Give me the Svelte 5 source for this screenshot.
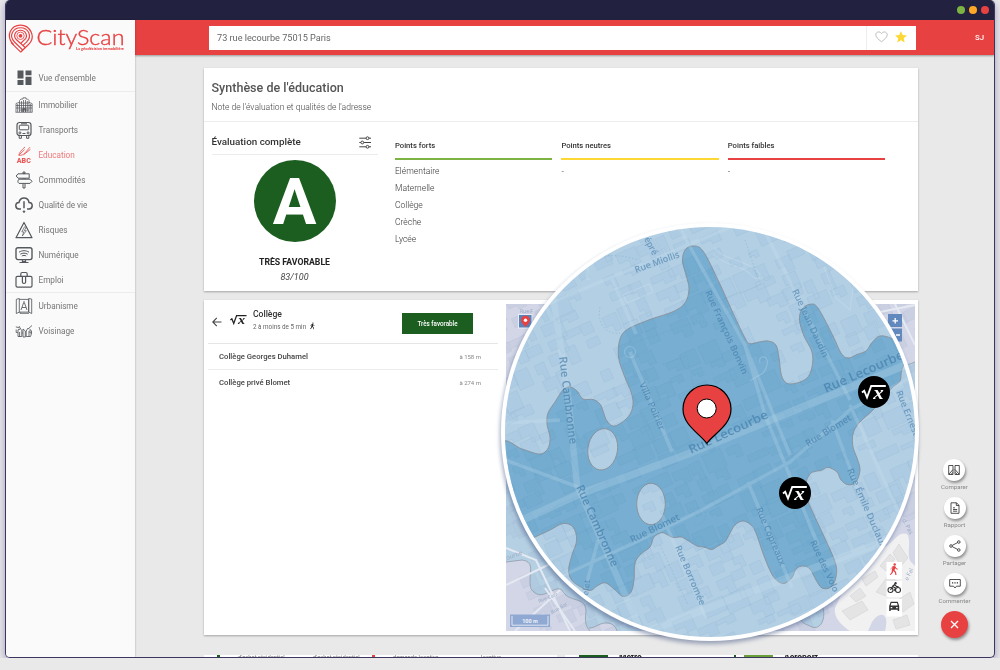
<script>
  const nav = [
    { label: "Vue d'ensemble", icon: 'grid', first: true },
    { label: 'Immobilier', icon: 'building' },
    { label: 'Transports', icon: 'bus' },
    { label: 'Education', icon: 'abc', active: true },
    { label: 'Commodités', icon: 'sign' },
    { label: 'Qualité de vie', icon: 'cloud' },
    { label: 'Risques', icon: 'risk' },
    { label: 'Numérique', icon: 'screen' },
    { label: 'Emploi', icon: 'case', last: true },
    { label: 'Urbanisme', icon: 'plan' },
    { label: 'Voisinage', icon: 'people' }
  ];
  const points = [
    { title: 'Points forts', color: '#7cb342', items: ['Elémentaire', 'Maternelle', 'Collège', 'Crèche', 'Lycée'] },
    { title: 'Points neutres', color: '#fdd835', items: ['-'] },
    { title: 'Points faibles', color: '#e84142', items: ['-'] }
  ];
  const schools = [
    { name: 'Collège Georges Duhamel', dist: 'à 158 m' },
    { name: 'Collège privé Blomet', dist: 'à 274 m' }
  ];
  const actions = [
    { label: 'Comparer', icon: 'compare' },
    { label: 'Rapport', icon: 'doc' },
    { label: 'Partager', icon: 'share' },
    { label: 'Commenter', icon: 'comment' }
  ];

  // Walking zone outline, smoothed with a Catmull-Rom spline.
  const zone = [
    [693,246],[685,250],[682.5,261],[686,275],[689,289],[685,303],[673,311.7],[650,319.5],[628,329],[620,339],[618.5,357],[624,375],[631,392],[633,405],[628,417],[615,426],[607,421],[603,411],[600,404],[593,399.5],[583,399],[577,391],[570,387],[563,390],[555,402],[548,413],[547,424],[550,437],[549,446],[545,452],[538,454],[522,449],[500,442],[480,480],[510,548],[535,537],[550,530],[563,523.5],[573,527],[576.7,540],[572,555],[568.7,569],[571,579],[579,586],[590,590.5],[597,586],[605,582.7],[613,588],[623,596.5],[631,592],[634,580],[635,563],[641,554],[650,547],[654,537],[661.7,532.7],[667,534.5],[673,537.5],[681,537],[687,540],[697,546],[704,547],[711.7,549.5],[718,546],[725,541.7],[729,535],[735,525],[743,521],[751,525],[756,533],[764,556],[773,576],[782.7,583.5],[791.7,578],[796,569],[802.7,566],[810,569],[816,580],[822,588],[831,587],[836,577],[835,561.7],[821,530],[806.7,498],[806,483],[810,474],[815,471.5],[822,470],[828,467.3],[837,472],[841,480],[848,484.7],[856,482],[860,470],[857,458],[853,447],[853,434],[859,423],[875,408],[892,388],[900,381],[902,369],[910,350],[893,339],[880,336],[871.7,343],[866,351],[857,354.5],[848,358],[841,353],[833,336],[818,308],[810,304.3],[802,309],[799.5,320],[804,336],[812,352],[812,367],[806,379],[790,384],[782,377],[779,358],[776,345],[768,341],[759,342],[750,343.7],[745,338],[733,313],[718,280],[703,251]
  ];
  function smooth(p) {
    const n = p.length;
    let d = `M${p[0]}`;
    for (let i = 0; i < n; i++) {
      const a = p[(i - 1 + n) % n], b = p[i], c = p[(i + 1) % n], e = p[(i + 2) % n];
      const k = 6;
      d += `C${(b[0] + (c[0] - a[0]) / k).toFixed(1)} ${(b[1] + (c[1] - a[1]) / k).toFixed(1)} ${(c[0] - (e[0] - b[0]) / k).toFixed(1)} ${(c[1] - (e[1] - b[1]) / k).toFixed(1)} ${c[0]} ${c[1]}`;
    }
    return d + 'Z';
  }
  const zonePath = smooth(zone);

  // Faint building footprints laid out on the street grid.
  const hash = (a, b) => {
    const v = Math.sin(a * 127.1 + b * 311.7) * 43758.5453;
    return v - Math.floor(v);
  };
  const blocks = [];
  for (let i = -12; i < 12; i++) {
    for (let j = -13; j < 13; j++) {
      const r = hash(i, j);
      if (r < 0.15) continue;
      const w = 9 + hash(j, i) * 15;
      const h = 7 + hash(i + 5, j + 9) * 13;
      const x = i * 20 + r * 9, y = j * 17 + r * 6;
      const m = r > 0.5 ? w * 0.5 : w;
      blocks.push(`M${x.toFixed(1)} ${y.toFixed(1)}h${w.toFixed(1)}v${h.toFixed(1)}h${(-m).toFixed(1)}v${(-h * 0.4).toFixed(1)}h${(m - w).toFixed(1)}z`);
    }
  }
  const blockPath = blocks.join('');

  const streets = [
    { t: 'Rue Miollis', x: 636, y: 273, r: -20, s: 9, w: 47 },
    { t: 'épré', x: 644, y: 239, r: 62, s: 9, w: 19 },
    { t: 'Rue François Bonvin', x: 705, y: 292, r: 65.5, s: 9, w: 91 },
    { t: 'Rue Jean Daudin', x: 792, y: 291, r: 65, s: 9, w: 74 },
    { t: 'Rue Cambronne', x: 559, y: 357, r: 83, s: 11.2, w: 88, b: true },
    { t: 'Rue Cambronne', x: 576, y: 487, r: 66, s: 11.2, w: 88, b: true },
    { t: 'Villa Poirier', x: 639, y: 384, r: 66, s: 9, w: 51 },
    { t: 'Rue Lecourbe', x: 691, y: 454, r: -25, s: 12.2, w: 86, b: true },
    { t: 'Rue Lecourbe', x: 826, y: 393, r: -24, s: 12.6, w: 86, b: true },
    { t: 'Rue Blomet', x: 632, y: 543, r: -26, s: 9.6, w: 54 },
    { t: 'Rue Blomet', x: 808, y: 447, r: -32, s: 9.4, w: 52 },
    { t: 'Rue Borromée', x: 675, y: 547, r: 67, s: 9, w: 64 },
    { t: 'Rue Copreaux', x: 756, y: 509, r: 67, s: 9, w: 62 },
    { t: 'Rue des Volo', x: 810, y: 542, r: 65, s: 9, w: 56 },
    { t: 'Rue Émile Duclaux', x: 847, y: 470, r: 66.5, s: 9, w: 86 },
    { t: 'Rue Ernest', x: 896, y: 392, r: 68, s: 9, w: 48 },
    { t: 'elet', x: 588, y: 596, r: -83, s: 8, w: 16 }
  ];
  const minor = 'M630 227L700 205M548 304L740 223L810 195M680 229L745 345L790 455M765 232L850 400M612 279L636 334M630 352L665 435L672 452M505 460L578 487M598 540L585 590M505 598L560 577L640 540L700 511L790 462L850 410L915 375M662 515L706 618M745 345L765 415L818 545M748 482L792 588M505 423L560 420M850 405L920 560M832 420L858 490M583 227L588 280';
</script>

{#snippet navIcon(name)}
  <svg class="ni" viewBox="0 0 18 18" fill="none" stroke="currentColor" stroke-width="1">
    {#if name === 'grid'}
      <path d="M2.500 1.500h6v8h-6zM2.500 11h6v5h-6zM10.500 1.500h6v4.700h-6zM10.500 7.800h6V16h-6z" fill="currentColor" stroke="none" />
    {:else if name === 'building'}
      <path d="M4.500 16V4.500L6 3h2V1.800h3V3h1.500l1.500 1.500V16M1 16V7.500l3.500-1.200M14 6.300l3.200 1.400V16M.5 16.300h17M6.500 5v11M8.500 4v12M10.500 4v12M12.300 5v11M2.700 8v8M15.700 8v8M4.500 7h9.500M1 9.500h16M1 12h16M4.500 14h9.500" stroke-width=".75" />
      <path d="M8 16v-3h2.500v3" stroke-width="1.400" />
    {:else if name === 'bus'}
      <rect x="2" y="1.500" width="14" height="13" rx="2.600" stroke-width="1.200" /><rect x="4.300" y="4.200" width="9.400" height="4.600" rx=".5" />
      <path d="M6 2.800h6M4.200 14.800v2.500h2.200v-2.500M11.600 14.800v2.500h2.200v-2.500M7.500 12.500h3" /><circle cx="4.900" cy="11.900" r="1" /><circle cx="13.100" cy="11.900" r="1" />
    {:else if name === 'abc'}
      <path d="M3.800 9.300c2.400.2 4.600-.4 6.400-2.600L15 1.200M3.800 9.300C4.300 6.500 6.300 4.200 10 1M4 9l5.600-5.400M8.600 8.800l6.800-5.400" stroke-width=".9" />
      <text x="8.800" y="17" text-anchor="middle" font-size="7.600" font-weight="900" fill="currentColor" stroke="none" textLength="14" lengthAdjust="spacingAndGlyphs">ABC</text>
    {:else if name === 'sign'}
      <path d="M8 1h2v1.600H8zM3 2.800h11.200v4.400H3L1.200 5zM4 8.200h11L17 10.300l-2 2.100H4c-1.400-.6-1.400-3.400 0-4.200zM8 7.200v1M10 7.200v1M8 12.500V17h2v-4.500" />
    {:else if name === 'cloud'}
      <path d="M6 13H4.200A3.300 3.300 0 0 1 4 6.400C4.600 3.500 6.500 2 9 2s4.500 1.500 5 4.400a3.300 3.300 0 0 1-.2 6.600H12M9 5.200v7" stroke-width="1.500" /><circle cx="9" cy="15.600" r=".8" fill="currentColor" />
    {:else if name === 'risk'}
      <path d="M9 1.500L17 16.700H1z" stroke-width="1.200" stroke-linejoin="round" /><path d="M9.500 5.800L6.800 10.900h2L7.300 15l4-5.300H9.200l2-3.300z" stroke-width=".7" />
    {:else if name === 'screen'}
      <rect x="1" y="1.800" width="16" height="11.800" rx="2" stroke-width="1.400" /><path d="M4 6.200c3.200-2 6.800-2 10 0M5.300 8.200c2.400-1.400 5-1.400 7.400 0M6.800 10c1.400-.8 3-.8 4.400 0" stroke-width="1" /><path d="M7.500 14v1.500h3V14M4.500 16.500h9" stroke-width="1.200" />
    {:else if name === 'case'}
      <rect x="1" y="5.300" width="16" height="10.800" rx="1.400" stroke-width="1.200" /><path d="M5.800 5.200V3c0-1 .5-1.500 1.400-1.500h3.600c.9 0 1.400.5 1.400 1.500v2.200M7.400 5.300v6c0 1.500 3.200 1.500 3.200 0v-6" stroke-width="1.200" />
    {:else if name === 'plan'}
      <path d="M1.300 2.300l3-.8v13.600l-3 1.400zM4.300 2.400h9.400v12.700H4.300M13.700 1.500l3 .6v14.400l-3-1.400zM6 13l2.500-7h1L12 13M7 10.500h4M9 4v2M5 15v1.300h9" stroke-width=".85" />
    {:else}
      <path d="M.8 4.800l3.200 1M4 4l1.500 3-2.500.8v6.700h3.800V8.200L5.500 7M1.200 7.500v3h1.600M8 15V7l2.300 2v6zM6.800 11h1M17 3.500L13 7M13 6l-1.800 3v5.500h4.300l1-3V9l-2-2.200M14 9v5.500M4.600 10v5M15 8v3h2" stroke-width=".85" />
    {/if}
  </svg>
{/snippet}

{#snippet root(color)}
  <path d="M-12 .5L-9.800 -1.300L-7 5.500L-2.800 -6H11.800" fill="none" stroke={color} stroke-width="1.900" />
  <text x="-.8" y="7" font-family="Liberation Serif, serif" font-style="italic" font-weight="bold" font-size="18" fill={color} textLength="10.500" lengthAdjust="spacingAndGlyphs">x</text>
{/snippet}

{#snippet walker()}
  <circle cx="6.700" cy="1.500" r="1.200" /><path d="M4.300 3.600L6 2.900l1.300.4.900 1.700 1.700.9-.4.800-2-.9-.4-.7-.5 2.300 1.400 1.400.5 3.200h-1.100l-.5-2.600-1.500-1.500-.8 2-2 2.200-.8-.7 1.700-2 .9-5.200-.8.6-.3 1.600-1-.2z" />
{/snippet}

<div class="window">
  <div class="titlebar"><i style="background:#7cb342"></i><i style="background:#ffa726"></i><i style="background:#e84142"></i></div>
  <div class="body">
    <aside>
      <div class="logo">
        <svg width="122" height="34" viewBox="0 0 122 34" fill="none" stroke="#e84142">
          <path d="M6.700 21.800C-2 13 4 2 13.500 2s16.400 12 7.500 20L13.500 29.200" stroke-width="1.250" />
          <path d="M4.100 19.600L13.700 29.200M15.700 27L7.500 19C1.300 13 6 4.700 13.500 4.700s12.300 8.300 6 14.400l-3.200 3M18.200 24.500L9.500 16.700C5.500 13 8.500 7.300 13.500 7.300s8.200 5.800 4 9.400L14.100 20" stroke-width="1.150" />
          <circle cx="13.500" cy="12.800" r="3.700" stroke-width=".8" /><circle cx="13.500" cy="12.800" r="1.900" fill="#e84142" stroke="none" />
          <text x="29.500" y="21.500" class="brand" textLength="88" lengthAdjust="spacingAndGlyphs">CityScan</text>
          <text x="69" y="26.600" class="tag" textLength="48" lengthAdjust="spacingAndGlyphs">La géodécision immobilière</text>
        </svg>
      </div>
      <nav>
        {#each nav as n}
          <a class:first={n.first} class:last={n.last} class:active={n.active}>{@render navIcon(n.icon)}<span>{n.label}</span></a>
        {/each}
      </nav>
    </aside>

    <div class="main">
      <header>
        <div class="search">
          <span>73 rue lecourbe 75015 Paris</span>
          <div class="fav">
            <svg width="13" height="12" viewBox="0 0 13 12"><path d="M6.500 10.800C2.800 7.900.8 6 .8 3.800c0-3 3.800-4 5.700-1.200C8.400-.2 12.200.8 12.200 3.800c0 2.200-2 4.100-5.700 7z" fill="none" stroke="#bdbdbd" /></svg>
            <svg width="12" height="12" viewBox="0 0 12 12"><path d="M6 0l1.700 4 4.300.4-3.300 2.800 1 4.300L6 9.200l-3.700 2.300 1-4.300L0 4.400 4.300 4z" fill="#fdd835" /></svg>
          </div>
        </div>
        <b>SJ</b>
      </header>

      <section class="card summary">
        <div class="head"><h1>Synthèse de l'éducation</h1><p>Note de l'évaluation et qualités de l'adresse</p></div>
        <div class="cols">
          <div class="score">
            <div class="title"><h2>Évaluation complète</h2>
              <svg width="12" height="13" viewBox="0 0 12 13" fill="none" stroke="#444"><path d="M.3 2.200h6.700M10 2.200h2M.3 6.500h1.500M4.800 6.500H12M.3 10.800h6.700M10 10.800h2" /><circle cx="8.500" cy="2.200" r="1.400" /><circle cx="3.300" cy="6.500" r="1.400" /><circle cx="8.500" cy="10.800" r="1.400" /></svg>
            </div>
            <div class="grade"><span>A</span></div>
            <strong>TRÈS FAVORABLE</strong>
            <em>83/100</em>
          </div>
          <div class="points">
            {#each points as p}
              <div><h3 style="border-color:{p.color}">{p.title}</h3>{#each p.items as it}<p>{it}</p>{/each}</div>
            {/each}
          </div>
        </div>
      </section>

      <section class="card detail">
        <div class="list">
          <div class="lh">
            <svg width="10" height="10" viewBox="0 0 10 10" fill="none" stroke="#444" stroke-width="1.100"><path d="M9.500 5H.8M4.800.9L.8 5l4 4.100" /></svg>
            <svg class="rt" width="17" height="12" viewBox="-12.500 -8 25 17">{@render root('#222')}</svg>
            <div class="lt"><h4>Collège</h4><p>2 à moins de 5 min <svg width="7" height="8" viewBox="0 0 12 13" fill="#222">{@render walker()}</svg></p></div>
            <span class="tag-ok">Très favorable</span>
          </div>
          {#each schools as s}<div class="row"><b>{s.name}</b><small>{s.dist}</small></div>{/each}
        </div>
        <svg class="map" width="409" height="327" viewBox="506 304 409 327">
          <rect x="506" y="304" width="409" height="327" fill="#d2d6e6" />
          <path d="M506 562L522 560C537 562 527 575 531 589C542 604 554 584 562 590C569 604 585 595 586 611C584 626 588 628 590 631H640L700 600L506 430Z" fill="#b5d0e3" />
          <path d="M915 362C910 364 906 366 903 363L890 380L900 470L915 452Z" fill="#b5d0e3" />
          <path d="M799 620C803 606 820 595 823 608C826 620 820 630 812 627C806 624 802 624 799 617Z" fill="#b5d0e3" />
          <path d="M589 628C596 628 600 622 608 623C614 624 616 628 617 631H590Z" fill="#d2d6e6" />
          <g transform="translate(710 432) rotate(-24)"><path d={blockPath} fill="#8d9cc4" fill-opacity=".1" stroke="#8d9cc4" stroke-opacity=".18" stroke-width=".5" /></g>
          <path d="M506 562L522 560C537 562 527 575 531 589C542 604 554 584 562 590C569 604 585 595 586 611C584 626 588 628 590 631M589 628C596 628 600 622 608 623C614 624 616 628 617 631M915 362C910 364 906 366 903 363M799 620C803 606 820 595 823 608C826 620 820 630 812 627C806 624 802 624 799 617" fill="none" stroke="#8995a2" stroke-width=".7" />
          <path d="M860 555L880 548C892 547 897 530 907 534C912 540 906 555 911 562L915 566V631H885C890 613 880 610 872 622L868 631H850C842 626 833 617 835 608Z" fill="#f1f1f2" />
          <path d="M842 611l20-10 6 9-18 10zM876 592l12-16 9 5-9 16zM862 579l13-8 3 6-12 9zM899 544l9 14-7 8-8-13zM898 600l12-8 4 12-11 8zM850 596l10-8 6 8-10 6zM893 620l14-5 3 10-14 4zM880 566l10-12 5 5-9 12z" fill="#e4e4e5" stroke="#cfcfd2" stroke-width=".5" />
          <path d="M506 548L536 560L570 631M506 585L552 563M545 588L575 631M515 631L560 590M895 304L915 345M880 312L915 305" stroke="#e4e9f2" stroke-width="2" fill="none" />
          <g font-family="Open Sans, sans-serif" font-size="5" fill="#9aa9c5"><text transform="translate(520 313)">Rue F</text><text transform="translate(507 560) rotate(-20)" font-size="6">ourbe</text><text transform="translate(539 603) rotate(-22)">Rue Carr</text><text transform="translate(552 614) rotate(-30)">Rue Bar</text><text transform="translate(902 520) rotate(62)" font-size="6">d. Pas</text><text transform="translate(908 581) rotate(-65)" font-size="6">e Fal</text></g>
          <rect x="518.500" y="314.500" width="13.500" height="13.500" fill="#5b83b8" stroke="#e8edf6" stroke-width="1" />
          <path d="M525.500 327c-3-3.600-4.500-4.800-4.500-6.800a4.500 4.500 0 0 1 9 0c0 2-1.500 3.200-4.500 6.800z" fill="#e84142" /><circle cx="525.500" cy="320.300" r="1.700" fill="#fff" />
          <path d="M888 314h14v13h-14zM888 328.500h14v13h-14z" fill="#6189bd" /><path d="M892.500 320.800h5.500M895.200 318v5.500M896 335h4" stroke="#fff" stroke-width="1.300" />
          <rect x="510" y="614.500" width="40" height="12.500" fill="#8fa9d3" /><path d="M512 616v9.200h36V616" fill="none" stroke="#dfe7f4" />
          <text x="530" y="623" text-anchor="middle" font-size="5.500" font-weight="bold" fill="#eef3fa" font-family="Roboto, sans-serif">100 m</text>
          <path d="M886.500 562h15.500v17h-15.500zM886.500 581h15.500v16h-15.500zM886.500 599h15.500v17.500h-15.500z" fill="#fff" />
        </svg>
      </section>

      <div class="next">
        <div class="strip s1"><i class="g"></i><span>d'achat résidentiel</span><span>d'achat résidentiel</span><i class="r"></i><span>demande locative</span><span>locative</span></div>
        <div class="strip s2"><i class="btn"></i><b>Métro</b></div>
        <div class="strip s3"><i class="tick"></i><i class="btn l"></i><b>Aéroport</b></div>
      </div>
    </div>
  </div>

  <svg class="lens" width="432" height="432" viewBox="494 216 432 432">
    <defs><clipPath id="disc"><circle cx="710" cy="432" r="205" /></clipPath></defs>
    <circle class="ring" cx="710" cy="432" r="209" fill="#fff" />
    <g clip-path="url(#disc)">
      <rect x="500" y="222" width="420" height="420" fill="#b3cfe4" />
      <path d={zonePath} fill="#77aed1" stroke="#8a9199" stroke-width=".9" />
      <g fill="#b3cfe4" stroke="#8a9199" stroke-width=".9"><ellipse cx="602.700" cy="449.300" rx="14.800" ry="20.800" transform="rotate(9 602.700 449.300)" /><ellipse cx="651" cy="504" rx="14.300" ry="20.700" /></g>
      <g transform="translate(710 432) rotate(-24)"><path d={blockPath} fill="#4f8fbd" fill-opacity=".05" stroke="#4f87b0" stroke-opacity=".1" stroke-width=".6" /></g>
      <g fill="none" stroke="#d5e9f5" stroke-opacity=".2"><path d={minor} stroke-width="3.500" /><path d="M553 296L568 395L577 485L645 640" stroke-width="6.500" /><path d="M505 528L577 495L688 454L822 399L925 357M640 634L790 577L915 530" stroke-width="7.500" /></g>
      <g fill="none" stroke="#dcecf6" stroke-opacity=".38" stroke-width="1.100"><path d="M623 295l26-11 4 8-26 11zM714 247c8 14 35 12 46 27 1 7-6 5-9 1-7-10-26-8-38-21M824 267l12 31 14 12 4-30M750 381c8-7 14-4 17-16 3-10-10-11-7-2" stroke-opacity=".26" /><circle cx="630" cy="352" r="5.500" stroke-opacity=".26" /></g>
      <g fill="none" stroke="#5f98c0" stroke-opacity=".35" stroke-width=".8" stroke-dasharray="1.500 2"><path d="M565 270c35-22 65-13 73-10M600 307c-4 20 10 28 20 26M633 343l65-22 12 2M663 364l24-8 12 60M690 510c20-10 20 15 5 15M660 545l28 60M745 240l12 35" /></g>
      <g class="streets">
        {#each streets as s}<text class:major={s.b} transform="translate({s.x} {s.y}) rotate({s.r})" font-size={s.s} textLength={s.w} lengthAdjust="spacingAndGlyphs">{s.t}</text>{/each}
      </g>
    </g>
    <path d="M707 443.500C699 433 683 425 683 409a24 24 0 0 1 48 0C731 425 715 433 707 443Z" fill="#e84142" stroke="#000" stroke-width="1.200" /><circle cx="706.700" cy="408.500" r="9.500" fill="#fff" stroke="#000" />
    <g transform="translate(874 392)"><circle r="16" />{@render root('#fff')}</g>
    <g transform="translate(795 493)"><circle r="16" />{@render root('#fff')}</g>
    <g transform="translate(888 563)" fill="#e84142">{@render walker()}</g>
    <g transform="translate(887.500 582)" fill="none" stroke="#333" stroke-width="1.100"><circle cx="3" cy="8" r="2.500" /><circle cx="10.500" cy="8" r="2.500" /><path d="M3 8l2-3.500 3 1.500L6.500 9M5 4.500L7 2.500l2 2h2" /><circle cx="8" cy="1.300" r=".7" fill="#333" /></g>
    <path transform="translate(888.700 601)" d="M.5 5L2 .8h7L10.500 5v5H9V8.700H2V10H.5zM2.700 2L2 4.500h7L8.300 2zM2 6v1.300h1.600V6zM7.400 6v1.300H9V6z" fill="#333" fill-rule="evenodd" />
  </svg>

  <div class="actions">
    {#each actions as a}
      <div class="act"><span><svg width="12" height="12" viewBox="0 0 12 12" fill="none" stroke="#333" stroke-width=".85">
        {#if a.icon === 'compare'}<path d="M5 1.500H.7v9H5zM5 5.500L.9 10.300M7 1.500h4.300v9H7zM7 5.500l4.200 4.800M7.300 8.500l2 1.800M5 8.500L3 10.300" />
        {:else if a.icon === 'doc'}<path d="M2 .8h5.500L10 3.300v8H2zM7.300.8v2.700H10M4 5.800h2M4 7.500h4.200M4 9.200h4.200" />
        {:else if a.icon === 'share'}<circle cx="2" cy="6" r="1.300" /><circle cx="9.800" cy="2" r="1.300" /><circle cx="9.800" cy="10" r="1.300" /><path d="M3.200 5.400l5.400-2.800M3.200 6.600L8.600 9.400" />
        {:else}<path d="M.7 1.500h10.600v6.700H7.500L6 10 4.500 8.200H.7z" /><path d="M3 4.800h1.200M5.400 4.800h1.200M7.800 4.800H9" stroke-width="1.300" />{/if}
      </svg></span><small>{a.label}</small></div>
    {/each}
    <div class="close"><svg width="9" height="9" viewBox="0 0 9 9" stroke="#fff" stroke-width="1.300"><path d="M1 1l7 7M8 1L1 8" /></svg></div>
  </div>
</div>

<style>
  :global(body) { background: #e9e9ea; overflow: hidden; font-family: Roboto, sans-serif; color: #333; }
  h1, h2, h3, h4, p { margin: 0; }
  .window { position: relative; box-sizing: border-box; width: 990px; height: 658px; margin-left: 5px; border: 1px solid #3a3660; border-top: 0; border-radius: 5px; background: #e9e9e9; overflow: hidden; display: flex; flex-direction: column; }
  :global(#app) { height: 658px; filter: drop-shadow(0 3px 4px rgba(90, 70, 130, .5)); }
  .titlebar { flex: none; height: 20px; background: #222240; display: flex; justify-content: flex-end; align-items: center; gap: 4px; padding-right: 5px; }
  .titlebar i { width: 8px; height: 8px; border-radius: 50%; }
  .body { display: flex; height: 637px; }
  aside { width: 129px; flex: none; background: #fafafa; box-shadow: 0 0 2px rgba(0, 0, 0, .3); z-index: 1; }
  .logo { height: 45px; }
  .logo svg { display: block; padding-left: 1px; padding-top: 3px; }
  .brand { font: 300 22px Lato, sans-serif; fill: #e84142; stroke: #e84142; stroke-width: .4; }
  .tag { font: 900 4px Lato, sans-serif; fill: #e84142; stroke: none; }
  nav a { display: flex; align-items: center; height: 25px; padding-left: 9px; gap: 6px; font-size: 8.200px; font-weight: 400; color: #757575; }
  nav a.first { height: 27px; box-sizing: border-box; border-bottom: 1px solid #ececec; }
  nav a.last { border-bottom: 1px solid #ececec; }
  nav a.active { color: #f0787a; }
  nav a.active .ni { color: #e8595b; }
  nav span { margin-left: -.5px; }
  .ni { width: 18px; height: 18px; color: #55585c; overflow: visible; }
  .main { flex: 1; min-width: 0; }
  header { height: 35px; background: #e84142; box-shadow: 0 1px 2px rgba(0, 0, 0, .35); display: flex; align-items: center; padding-left: 74px; }
  .search { width: 707px; height: 24px; background: #fff; display: flex; align-items: center; justify-content: space-between; font-size: 9.150px; color: #666; }
  .search > span { padding-left: 8px; }
  .fav { height: 24px; width: 50px; box-sizing: border-box; border-left: 1px solid #eee; display: flex; align-items: center; padding-left: 8px; gap: 7px; }
  .fav svg { margin-top: -2px; }
  header b { font-size: 7.800px; color: #fff; font-weight: 500; margin-left: 59px; }
  .card { width: 714px; margin-left: 69px; background: #fff; box-shadow: 0 1px 2px rgba(0, 0, 0, .3); box-sizing: border-box; }
  .summary { height: 223px; margin-top: 13px; }
  .head { height: 54px; box-sizing: border-box; border-bottom: 1px solid #ededed; padding: 12px 0 0 7.500px; }
  h1 { font-size: 12.550px; line-height: 16px; font-weight: 500; color: #555; }
  .head p { font-size: 8.550px; line-height: 12px; margin-top: 5px; color: #444; font-weight: 300; }
  .cols { display: flex; }
  .score { width: 166px; margin-left: 7.500px; display: flex; flex-direction: column; align-items: center; }
  .title { width: 166px; height: 33px; box-sizing: border-box; border-bottom: 1px solid #ececec; display: flex; justify-content: space-between; padding: 14px 7px 0 0; }
  h2 { font-size: 9.850px; line-height: 12px; font-weight: 500; color: #333; }
  .grade { width: 82px; height: 82px; border-radius: 50%; background: #1b5e20; margin-top: 5px; display: flex; justify-content: center; }
  .grade span { color: #fff; font-size: 65px; line-height: 84px; font-weight: 700; }
  .score strong { font-size: 8.700px; line-height: 12px; font-weight: 700; color: #222; margin-top: 13.500px; }
  .score em { font-size: 9px; line-height: 12px; margin-top: 3.500px; color: #444; }
  .points { display: flex; gap: 9px; margin-left: 17.500px; padding-top: 18px; }
  .points div { width: 157.400px; }
  h3 { height: 18px; border-bottom: 2px solid; font-size: 7.650px; line-height: 12px; font-weight: 500; color: #333; margin-bottom: 3px; }
  .points p { font-size: 8.550px; line-height: 17px; color: #333; font-weight: 300; }
  .detail { height: 335px; margin-top: 9px; display: flex; padding: 4px 3.500px 0 4px; }
  .list { width: 290px; margin-right: 7.500px; }
  .lh { height: 39px; border-bottom: 1px solid #e6e6e6; display: flex; align-items: flex-start; padding-left: 4px; }
  .lh > svg:first-child { margin-top: 13px; }
  .rt { margin: 10px 6px 0 8px; }
  .lt { width: 149px; margin-top: 4px; }
  h4 { font-size: 8.600px; line-height: 12px; font-weight: 500; }
  .lt p { font-size: 6.300px; line-height: 15px; color: #666; }
  .lt p svg { vertical-align: -1px; margin-left: 1px; }
  .tag-ok { width: 71px; height: 21px; margin-top: 9px; background: #1b5e20; color: #fff; font-size: 6.300px; font-weight: 500; text-align: center; line-height: 22px; }
  .row { display: flex; align-items: center; justify-content: space-between; box-sizing: border-box; height: 25px; padding: 0 17px 0 11px; }
  .row + .row { height: 25px; border-top: 1px solid #ececec; }
  .row b { font-size: 7.700px; font-weight: 500; color: #444; }
  .row small { font-size: 6px; color: #888; }
  .map { flex: none; }
  .next { display: flex; margin: 20px 0 0 69px; height: 2px; overflow: hidden; background: linear-gradient(90deg, #fff 353px, transparent 353px 361px, #fff 361px 714px, transparent 714px); }
  .strip { display: flex; align-items: flex-start; font-size: 5.800px; line-height: 7px; color: #777; }
  .strip i { width: 3px; height: 4px; flex: none; }
  .strip.s1 { width: 353px; }
  .g { background: #1b5e20; margin-left: 13px; }
  .r { background: #e84142; margin-left: 2px; }
  .s1 span { margin: -1px 8px 0 18px; width: 49px; white-space: nowrap; }
  .s1 span:last-child { margin-left: 31px; }
  .s2 { width: 155px; padding-left: 22px; }
  .s3 .tick { width: 2px; margin-right: 8px; background: #1b5e20; }
  .strip .btn { width: 29px; height: 5px; background: #1b5e20; }
  .strip .l { background: #689f38; }
  .strip b { margin-left: 11px; margin-top: -1px; font-size: 8.500px; font-weight: 700; color: #222; line-height: 7px; }
  .lens { position: absolute; left: 488px; top: 216px; }
  .ring { filter: drop-shadow(-1px 3px 2px rgba(50, 70, 120, .45)); }
  .streets { font-family: "Open Sans", sans-serif; font-weight: 600; fill: #3f7aa8; fill-opacity: .6; }
  .major { fill-opacity: .66; }
  .actions { position: absolute; left: 925.500px; top: 459px; width: 46px; display: flex; flex-direction: column; align-items: center; }
  .act { height: 38px; display: flex; flex-direction: column; align-items: center; }
  .act span { width: 22px; height: 22px; border-radius: 50%; background: #fff; box-shadow: 1px 2px 3px rgba(0, 0, 0, .4); display: flex; align-items: center; justify-content: center; }
  .act small { font-size: 6.100px; line-height: 8px; margin-top: 2px; color: #888; }
  .close { width: 27px; height: 27px; border-radius: 50%; background: #e84142; box-shadow: 1px 2px 3px rgba(0, 0, 0, .4); display: flex; align-items: center; justify-content: center; }
</style>
